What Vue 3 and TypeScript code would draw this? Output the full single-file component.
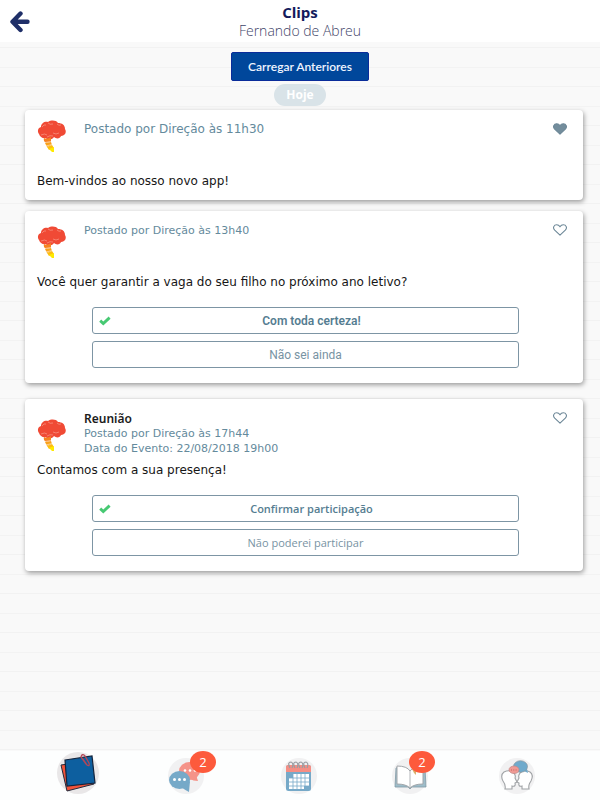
<script setup lang="ts">
import { ref } from 'vue'

interface Option {
  label: string
}

interface Clip {
  id: number
  title?: string
  meta: string
  eventDate?: string
  text: string
  liked: boolean
  variant: 'wide' | 'poll' | 'event'
  options: Option[]
  selected: number
}

const clips = ref<Clip[]>([
  {
    id: 1,
    meta: 'Postado por Direção às 11h30',
    text: 'Bem-vindos ao nosso novo app!',
    liked: true,
    variant: 'wide',
    options: [],
    selected: -1,
  },
  {
    id: 2,
    meta: 'Postado por Direção às 13h40',
    text: 'Você quer garantir a vaga do seu filho no próximo ano letivo?',
    liked: false,
    variant: 'poll',
    options: [{ label: 'Com toda certeza!' }, { label: 'Não sei ainda' }],
    selected: 0,
  },
  {
    id: 3,
    title: 'Reunião',
    meta: 'Postado por Direção às 17h44',
    eventDate: 'Data do Evento: 22/08/2018 19h00',
    text: 'Contamos com a sua presença!',
    liked: false,
    variant: 'event',
    options: [{ label: 'Confirmar participação' }, { label: 'Não poderei participar' }],
    selected: 0,
  },
])
</script>

<template>
  <div class="page">
    <header class="topbar">
      <button class="back" type="button" aria-label="Voltar">
        <svg width="20" height="22" viewBox="0 0 20 22">
          <path d="M10.500 2.500 L2.500 10.800 L10.500 19 M3.500 10.800 H17.500" fill="none" stroke="#1f2f68" stroke-width="4.400" stroke-linecap="round" stroke-linejoin="round" />
        </svg>
      </button>
      <div class="heading">
        <h1>Clips</h1>
        <p>Fernando de Abreu</p>
      </div>
    </header>

    <main class="feed">
      <button class="load" type="button">Carregar Anteriores</button>
      <span class="day">Hoje</span>

      <article v-for="clip in clips" :key="clip.id" class="card" :class="clip.variant">
        <div class="head">
          <svg class="logo" width="30" height="33" viewBox="0 0 30 33" aria-hidden="true">
            <path d="M2 14 C0 11 1 8 4 7 C4 3 8 1 11 2 C14 0 19 0 21 3 C25 3 28 5 28 9 C30 12 28 16 24 16 C23 19 19 19 17 17 C15 20 10 21 9 18 C6 19 3 17 2 14Z" fill="#f04a35" />
            <path d="M5 7 Q7 4 9 5 M11 3 Q13 5 16 4 M20 4 Q22 6 24 5 M4 15 Q8 13 10 15 M16 13 Q19 15 22 13 M10 17 Q13 15 16 16" fill="none" stroke="#f9a696" stroke-width="0.600" />
            <path d="M7 18 Q10 20 14 17 L14 22 L9 23 Q6 21 7 18Z" fill="#f58220" />
            <path d="M8 23 L14 22 L15 25 L10 27Z" fill="#f9a11b" />
            <path d="M10 27 L15 25 L17 28 L12 30Z" fill="#fdbd10" />
            <path d="M12 29 L17 27 L17 32 L15 32Z" fill="#ffea00" />
            <path d="M8 22.500 L14 21.500 M9 26 L15 24.500" stroke="#fff" stroke-width="0.500" />
          </svg>
          <div class="info">
            <h2 v-if="clip.title">{{ clip.title }}</h2>
            <p>{{ clip.meta }}</p>
            <p v-if="clip.eventDate">{{ clip.eventDate }}</p>
          </div>
          <button class="like" type="button" aria-label="Curtir" :aria-pressed="clip.liked" @click="clip.liked = !clip.liked">
            <svg width="14" height="12" viewBox="0 0 14 12">
              <path d="M7 11.200 L1.700 6.200 C-0.600 3.800 0.900 0.800 3.700 0.800 C5.300 0.800 6.400 1.800 7 2.800 C7.600 1.800 8.700 0.800 10.300 0.800 C13.100 0.800 14.600 3.800 12.300 6.200Z" :fill="clip.liked ? '#738d9c' : 'none'" stroke="#6c8797" stroke-width="1.100" stroke-linejoin="round" />
            </svg>
          </button>
        </div>
        <p class="text">{{ clip.text }}</p>
        <div v-if="clip.options.length" class="options">
          <button
            v-for="(option, index) in clip.options"
            :key="option.label"
            class="option"
            type="button"
            :aria-pressed="clip.selected === index"
            @click="clip.selected = index"
          >
            <svg v-if="clip.selected === index" width="12" height="10" viewBox="0 0 12 10">
              <path d="M1.200 4.600 L4.300 7.500 L10.600 1.600" fill="none" stroke="#47c973" stroke-width="2.900" />
            </svg>
            <span>{{ option.label }}</span>
          </button>
        </div>
      </article>
    </main>

    <nav class="tabs">
      <a class="current" href="#clips" aria-label="Clips">
        <svg width="42" height="44" viewBox="0 0 42 44">
          <circle cx="21" cy="22" r="21" fill="#e9e7e8" />
          <path d="M4 14 L31 10 L37 33 L10 40Z" fill="#f0533a" stroke="#222b3c" stroke-width="1" />
          <path d="M8 9 L35 5 L38 32 L10 35Z" fill="#0d5f9f" stroke="#13243c" stroke-width="1.200" />
          <path d="M26 8 L30 14 Q33 16 32 12 L28 5 Q25 2 24 6 L29 13" fill="none" stroke="#b34758" stroke-width="1.300" />
        </svg>
      </a>
      <a href="#mensagens" aria-label="Mensagens">
        <svg width="36" height="36" viewBox="0 0 36 36">
          <circle cx="18" cy="18" r="18" fill="#f1f1f2" />
          <ellipse cx="21.500" cy="13" rx="10.500" ry="9" fill="#f59389" />
          <path d="M17 20 L28 17 L30 23 Q25 23 22 21Z" fill="#f59389" />
          <ellipse cx="11.500" cy="22" rx="10.500" ry="9" fill="#76a9c8" />
          <path d="M13 29 L22 23 L21 34 Q17 32 13 29Z" fill="#76a9c8" />
          <g fill="#fff"><circle cx="17" cy="12.500" r="1.300" /><circle cx="22" cy="12.500" r="1.300" /><circle cx="27" cy="12.500" r="1.300" /><circle cx="6.500" cy="21.500" r="1.500" /><circle cx="11.500" cy="21.500" r="1.500" /><circle cx="16.500" cy="21.500" r="1.500" /></g>
        </svg>
        <span class="badge">2</span>
      </a>
      <a href="#calendario" aria-label="Calendário">
        <svg width="36" height="36" viewBox="0 0 36 36">
          <circle cx="18" cy="18" r="18" fill="#f1f1f2" />
          <rect x="5" y="7" width="25" height="26" rx="2.500" fill="#76a9c8" />
          <path d="M5 14 V9 Q5 7 7 7 H28 Q30 7 30 9 V14Z" fill="#f58e84" />
          <path d="M12 16 H28 V28 H23 V31 H8 V20 H12Z" fill="#fff" />
          <path d="M8 20 H28 M8 24 H28 M8 28 H28 M12 16 V31 M16 16 V31 M20 16 V31 M24 16 V28" stroke="#76a9c8" stroke-width="0.800" />
          <g fill="none" stroke="#999da2" stroke-width="1.200"><path d="M9 10 Q6 4 10 4 Q13 5 11 10" /><path d="M14 10 Q11 4 15 4 Q18 5 16 10" /><path d="M19 10 Q16 4 20 4 Q23 5 21 10" /><path d="M24 10 Q21 4 25 4 Q28 5 26 10" /></g>
        </svg>
      </a>
      <a class="agenda" href="#agenda" aria-label="Agenda">
        <svg width="36" height="36" viewBox="0 0 36 36">
          <circle cx="18" cy="18" r="18" fill="#f1f1f2" />
          <path d="M4 10 L3 29 L16 29 L18 31 L20 29 L34 29 L33 10 L29 9 V24 L18 29 L7 24 V9Z" fill="#9dbdca" stroke="#8199a4" stroke-width="0.800" />
          <path d="M5 8 Q15 8 18 13 Q22 8 31 8 V26 Q22 26 18 30 Q14 26 5 26Z" fill="#fff" stroke="#a2a6aa" stroke-width="1" />
          <path d="M18 13 V30" stroke="#b2b5b8" stroke-width="1" />
          <path d="M20 11 L24 10 V17 L22 15Z" fill="#d9b36d" />
        </svg>
        <span class="badge">2</span>
      </a>
      <a href="#conversas" aria-label="Conversas">
        <svg width="36" height="36" viewBox="0 0 36 36">
          <circle cx="18" cy="18" r="18" fill="#f1f1f2" />
          <path d="M6 31 Q7 27 4 23 Q1 17 5 14 Q11 11 15 15 Q17 18 16 20 L18 24 L16 25 Q17 29 13 28 L13 31Z" fill="#fff" stroke="#a0a3a6" stroke-width="1.100" />
          <path d="M30 31 Q29 27 32 23 Q35 17 31 14 Q25 11 21 15 Q19 18 20 20 L18 24 L20 25 Q19 29 23 28 L23 31Z" fill="#fff" stroke="#a0a3a6" stroke-width="1.100" />
          <path d="M23 12 L28 11 L29 15Z" fill="#6faacc" />
          <ellipse cx="21.500" cy="8.500" rx="7" ry="5.800" fill="#6faacc" stroke="#8a969d" stroke-width="0.700" />
          <ellipse cx="15" cy="11.800" rx="5" ry="3.800" fill="#f09a94" stroke="#c08a88" stroke-width="0.700" />
          <path d="M12 12 H18" stroke="#c4625d" stroke-width="1" stroke-dasharray="1 1.300" />
        </svg>
      </a>
    </nav>
  </div>
</template>

<style>
body {
  margin: 0;
}
</style>

<style scoped>
.page {
  display: flex;
  flex-direction: column;
  min-height: 100vh;
  font-family: "DejaVu Sans", Verdana, sans-serif;
  background: #f9f9f9;
}

h1,
h2,
p {
  margin: 0;
}

button {
  margin: 0;
  padding: 0;
  border: 0;
  background: none;
  cursor: pointer;
}

svg {
  display: block;
}

.topbar {
  display: grid;
  grid-template-columns: 40px 1fr 40px;
  align-items: center;
  height: 42px;
  background: #fff;
}

.back {
  justify-self: center;
  padding-top: 2px;
}

.heading {
  text-align: center;
}

.heading h1 {
  font: 700 15px/20px "Open Sans", sans-serif;
  color: #131b5c;
}

.heading p {
  font: 300 14px/18px "Open Sans", sans-serif;
  color: #3f4568;
}

.feed {
  flex: 1;
  display: flex;
  flex-direction: column;
  align-items: center;
  padding: 10px 0 40px;
  background-color: #f9f9f9;
  background-image: linear-gradient(transparent 5px, #f2f2f2 5px, #f2f2f2 6px, transparent 6px, transparent 25px, #f3f3f3 25px, #f3f3f3 26px, transparent 26px);
  background-size: 100% 39px;
}

.load {
  height: 29px;
  padding: 0 16px;
  border: 1px solid #0a2c9a;
  border-radius: 2px;
  background: #00479b;
  color: #eef4ff;
  font: 600 12px Lato, sans-serif;
}

.day {
  margin: 3px 0 4px;
  padding: 0 12px;
  border-radius: 11px;
  background: #d9e3e8;
  color: #fff;
  font: 700 12px/22px "Open Sans", sans-serif;
}

.card {
  box-sizing: border-box;
  align-self: stretch;
  margin: 0 17px 0 25px;
  padding: 10px 12px 15px;
  border-radius: 4px;
  background: #fff;
  box-shadow: 1px 2px 5px rgba(0, 0, 0, 0.38);
}

.wide {
  padding-bottom: 10px;
}

.poll {
  margin-top: 11px;
}

.event {
  margin-top: 16px;
}

.head {
  display: flex;
  align-items: flex-start;
  height: 52px;
}

.poll .logo {
  margin-top: 5px;
}

.event .logo {
  margin-top: 10px;
}

.info {
  flex: 1;
  padding: 2px 0 0 17px;
  font-size: 11px;
  line-height: 15px;
  color: #648a9c;
}

.wide .info {
  font-size: 12px;
}

.info h2 {
  font: 600 12px/15px "Noto Sans", sans-serif;
  color: #1c1c1c;
}

.like {
  padding: 3px 4px 0 0;
}

.text {
  font-size: 12px;
  line-height: 18px;
  color: #161616;
}

.options {
  display: grid;
  gap: 7px;
  margin: 16px 52px 0 55px;
}

.option {
  display: flex;
  align-items: center;
  height: 27px;
  padding: 0 6px;
  border: 1px solid #7d95a4;
  border-radius: 3px;
  background: #fff;
  color: #7893a3;
  font: 12px Roboto, sans-serif;
}

.option span {
  flex: 1;
}

.option[aria-pressed="true"] {
  font-weight: 600;
  color: #557d91;
}

.event .option {
  font-family: "Open Sans", sans-serif;
  font-size: 11px;
}

.tabs {
  display: grid;
  grid-template-columns: 111fr 113fr 111fr 107fr 101fr;
  align-items: center;
  justify-items: start;
  height: 49px;
  padding-left: 57px;
  background: #fdfefe;
}

.tabs a {
  position: relative;
  text-decoration: none;
}

.tabs .current {
  align-self: start;
}

.badge {
  position: absolute;
  left: 22px;
  top: -7px;
  width: 26px;
  border-radius: 50%;
  background: #fd5a3c;
  color: #fff;
  font: 13px/22px "Open Sans", sans-serif;
  text-align: center;
}

.agenda .badge {
  left: 17px;
}
</style>
